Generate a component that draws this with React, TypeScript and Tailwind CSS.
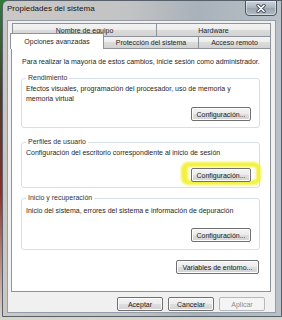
import React from "react";

function Btn({ children, className = "", disabled = false }: { children: React.ReactNode; className?: string; disabled?: boolean }) {
  return (
    <div
      className={
        "flex h-[14px] items-center justify-center rounded-[2px] border text-[7px] leading-none " +
        (disabled
          ? "border-[#b5b9bd] bg-[#f4f4f4] text-[#8d8d8d] "
          : "border-[#707070] bg-[linear-gradient(#f4f4f4_0%,#ececec_50%,#dedede_50%,#d3d3d3_100%)] text-[#1b1b1b] shadow-[inset_0_0_0_1px_#fcfcfc] ") +
        className
      }
    >
      {children}
    </div>
  );
}

function Group({
  label,
  children,
  className = "",
}: {
  label: string;
  children: React.ReactNode;
  className?: string;
}) {
  return (
    <fieldset className={"rounded-[3px] border border-[#d5dfe5] " + className}>
      <legend className="ml-[4px] px-[2px] text-[7px] leading-[8px] text-[#333333]">{label}</legend>
      {children}
    </fieldset>
  );
}

const tabBg =
  "bg-[linear-gradient(#f3f3f3_0%,#ececec_50%,#dcdcdc_50%,#d2d2d2_100%)]";

export default function App() {
  return (
    <div className="h-[320px] w-[282px] overflow-hidden bg-[linear-gradient(#2f7a3a_0%,#4a3a30_30%,#8a2e2a_60%,#d8d6cc_100%)] font-['Liberation_Sans',Arial,sans-serif] text-[#262626]">
      <div className="ml-[2px] flex h-[317px] w-[280px] flex-col rounded-tl-[6px] border border-[#56616b] bg-[linear-gradient(90deg,#cbc8c4_0%,#c2c3c4_45%,#a9b1ba_70%,#b9c0c6_100%)]">
        {/* title bar */}
        <div className="flex h-[19px] shrink-0 items-start">
          <div className="pl-[4px] pt-[3px] text-[8px] leading-[10px] text-[#141414]">
            Propiedades del sistema
          </div>
          <div className="-mt-[1px] ml-auto mr-[4px] flex h-[16px] w-[32px] items-center justify-center rounded-b-[4px] border border-[#4a5561] bg-[linear-gradient(#cfd5db,#a9b3bd_50%,#98a3ae_50%,#b3bdc6)] shadow-[inset_0_0_0_1px_rgba(255,255,255,0.45)]">
            <svg width="10" height="9" viewBox="0 0 10 9">
              <path d="M2 1.5 L8 7.5 M8 1.5 L2 7.5" stroke="#39434d" strokeWidth="3.2" strokeLinecap="round" />
              <path d="M2 1.5 L8 7.5 M8 1.5 L2 7.5" stroke="#ffffff" strokeWidth="1.7" strokeLinecap="round" />
            </svg>
          </div>
        </div>

        {/* client area */}
        <div className="mb-[3px] ml-[4px] mr-[5px] flex flex-1 flex-col border border-[#959ea7] bg-[#f0f0f0] pt-[2px]">
          {/* tabs */}
          <div className="ml-[3px] mr-[4px] flex flex-col">
            <div className="flex h-[13px] pl-[1px] text-[7px] leading-none">
              <div className={"flex w-[144px] items-center justify-center border-l border-t border-[#8e939a] " + tabBg}>
                Nombre de equipo
              </div>
              <div className={"flex flex-1 items-center justify-center border-l border-r border-t border-[#8e939a] " + tabBg}>
                Hardware
              </div>
            </div>
            <div className="flex h-[12px] text-[7px] leading-none">
              <div className="relative z-10 -mb-[1px] -ml-[1px] -mt-[3px] flex h-[16px] w-[94px] items-center justify-center border-l border-r border-t border-[#8e939a] bg-white pb-[1px]">
                Opciones avanzadas
              </div>
              <div className={"flex w-[94px] items-center justify-center border-t border-[#8e939a] " + tabBg}>
                Protección del sistema
              </div>
              <div className={"flex flex-1 items-center justify-center border-l border-r border-t border-[#8e939a] " + tabBg}>
                Acceso remoto
              </div>
            </div>

            {/* panel */}
            <div className="flex flex-col border border-[#8e939a] bg-white pb-[17px] pl-[9px] pr-[10px] pt-[8px]">
              <div className="pl-[1px] text-[7px] leading-[10px]">
                Para realizar la mayoría de estos cambios, inicie sesión como administrador.
              </div>

              <Group label="Rendimiento" className="mt-[7px] pb-[6px] pr-[8px]">
                <div className="pl-[4px] pt-[2px] text-[7px] leading-[10px]">
                  Efectos visuales, programación del procesador, uso de memoria y
                  <br />
                  memoria virtual
                </div>
                <div className="mt-[3px] flex justify-end">
                  <Btn className="w-[60px]">Configuración...</Btn>
                </div>
              </Group>

              <Group label="Perfiles de usuario" className="mt-[10px] pb-[5px] pr-[8px]">
                <div className="pl-[4px] pt-[2px] text-[7px] leading-[10px]">
                  Configuración del escritorio correspondiente al inicio de sesión
                </div>
                <div className="mt-[10px] flex justify-end">
                  <div className="relative">
                    <div className="absolute -bottom-[3px] -left-[10px] -right-[10px] -top-[6px] rounded-[7px] border-[5px] border-l-[7px] border-[#f2ef2a]/90 blur-[1.2px]" />
                    <Btn className="relative w-[60px]">Configuración...</Btn>
                  </div>
                </div>
              </Group>

              <Group label="Inicio y recuperación" className="mt-[6px] pb-[7px] pr-[8px]">
                <div className="pl-[4px] pt-[4px] text-[7px] leading-[10px]">
                  Inicio del sistema, errores del sistema e información de depuración
                </div>
                <div className="mt-[12px] flex justify-end">
                  <Btn className="w-[60px]">Configuración...</Btn>
                </div>
              </Group>

              <div className="mt-[10px] flex justify-end pr-[1px]">
                <Btn className="w-[83px]">Variables de entorno...</Btn>
              </div>
            </div>
          </div>

          {/* bottom buttons */}
          <div className="mt-[5px] flex justify-end gap-[5px] pr-[10px]">
            <Btn className="w-[46px]">Aceptar</Btn>
            <Btn className="w-[46px]">Cancelar</Btn>
            <Btn className="w-[46px]" disabled>
              Aplicar
            </Btn>
          </div>
        </div>
      </div>
    </div>
  );
}
